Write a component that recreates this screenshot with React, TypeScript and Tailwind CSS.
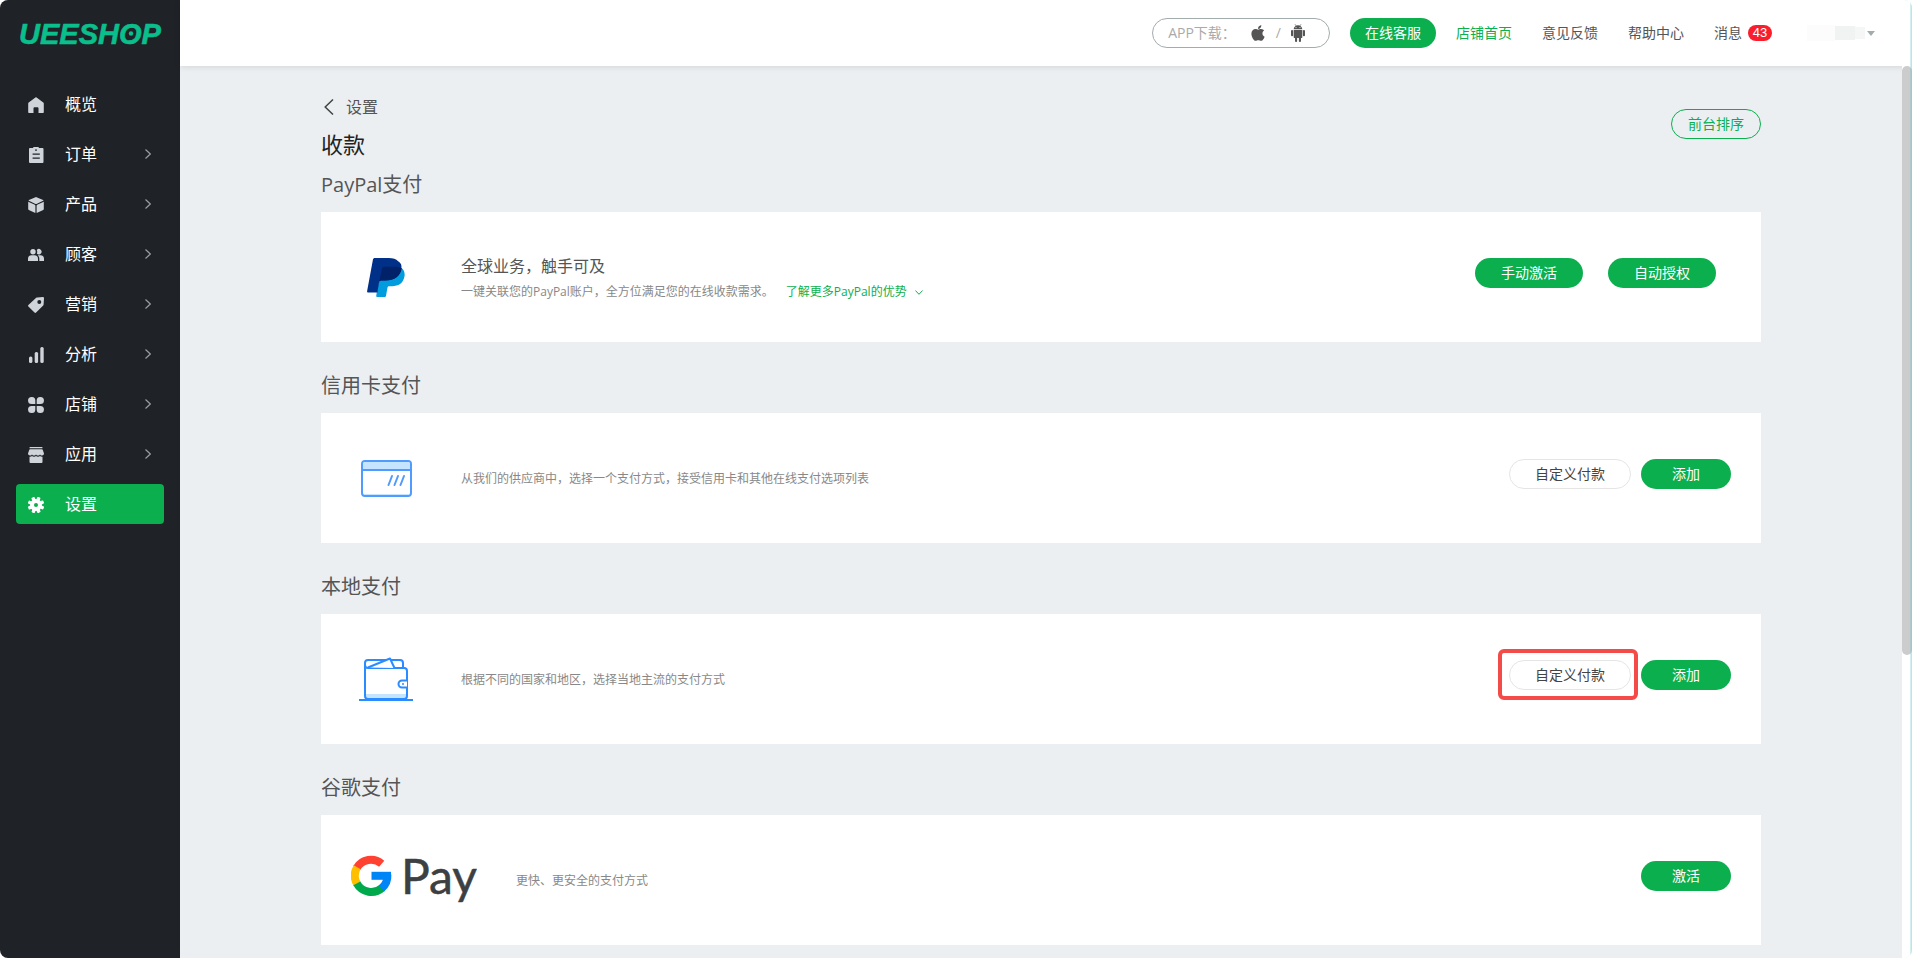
import React, { useState } from "react";
import { FaApple } from "react-icons/fa";

type IconProps = { className?: string };

const HomeIcon = ({ className }: IconProps) => (
  <svg viewBox="0 0 16 16" fill="currentColor" className={className}>
    <path d="M8.6.5a1 1 0 0 0-1.2 0L.7 5.6A1.2 1.2 0 0 0 .2 6.500V15.200c0 .4.3.8.8.8h4.500v-4.800c0-.5.4-.9.9-.9h3.200c.5 0 .9.4.9.9V16H15c.5 0 .8-.4.8-.8V6.500c0-.4-.2-.7-.5-.9L8.600.5Z" />
  </svg>
);

const OrderIcon = ({ className }: IconProps) => (
  <svg viewBox="0 0 16 16" fill="currentColor" className={className}>
    <path
      fillRule="evenodd"
      d="M5.500 0h5l.5 1H14.500a1 1 0 0 1 1 1v13a1 1 0 0 1-1 1h-12.500a1 1 0 0 1-1-1V2a1 1 0 0 1 1-1H5l.5-1ZM8 2.200a.9.9 0 1 0 .01 1.800A.9.9 0 0 0 8 2.200ZM4.600 6.500v1.200h7.200V6.500H4.600Zm0 4v1.200h7.200v-1.200H4.600Z"
    />
  </svg>
);

const ProductIcon = ({ className }: IconProps) => (
  <svg viewBox="0 0 16 16" fill="currentColor" className={className}>
    <path d="M7.500.2a1.200 1.200 0 0 1 1 0l6.600 2.900c.3.1.3.5 0 .7L8.500 7a1.200 1.200 0 0 1-1 0L.9 3.800c-.3-.2-.3-.6 0-.7L7.500.2Z" />
    <path d="M.2 5.200c0-.3.300-.5.6-.3l6 2.900c.4.200.6.500.6.900v6.700c0 .400-.3.600-.6.400L.8 13.100a1.100 1.100 0 0 1-.6-1V5.200ZM15.800 5.200c0-.3-.3-.5-.6-.3l-6 2.900c-.4.200-.6.500-.6.900v6.700c0 .4.3.6.6.4l6-2.700c.4-.200.6-.600.6-1V5.200Z" />
  </svg>
);

const CustomerIcon = ({ className }: IconProps) => (
  <svg viewBox="0 0 16 16" fill="currentColor" className={className}>
    <circle cx="5" cy="4.700" r="2.700" />
    <path d="M0 14v-2.300A3.500 3.500 0 0 1 3.500 8.200h3A3.500 3.500 0 0 1 10 11.700V14H0Z" />
    <path d="M8.800 2.900a2.700 2.700 0 1 1 0 3.600 4.200 4.200 0 0 0 0-3.600ZM9.700 8.200h2.800A3.500 3.500 0 0 1 16 11.700V14h-4.700v-2.500c0-1.300-.6-2.500-1.600-3.300Z" />
  </svg>
);

const TagIcon = ({ className }: IconProps) => (
  <svg viewBox="0 0 16 16" fill="currentColor" className={className}>
    <path
      fillRule="evenodd"
      d="M9.300.4 14.800 0c.7 0 1.200.500 1.200 1.200l-.4 6.400c0 .3-.1.600-.4.800L8.100 15.600a1.200 1.200 0 0 1-1.600 0L.4 9.500a1.200 1.200 0 0 1 0-1.600L8.200.8c.3-.3.700-.4 1.100-.4Zm2 2.500a2 2 0 1 0 0 4 2 2 0 0 0 0-4Z"
    />
  </svg>
);

const ChartIcon = ({ className }: IconProps) => (
  <svg viewBox="0 0 16 16" fill="currentColor" className={className}>
    <rect x="1" y="9.500" width="3.400" height="6.500" rx="1.500" />
    <rect x="6.700" y="5" width="3.400" height="11" rx="1.500" />
    <rect x="12.300" y="0" width="3.400" height="16" rx="1.500" />
  </svg>
);

const StoreIcon = ({ className }: IconProps) => (
  <svg viewBox="0 0 16 16" fill="currentColor" className={className}>
    <path d="M3.600 0a3.600 3.600 0 0 1 3.700 3.600v3.500H3.600A3.500 3.500 0 0 1 3.600 0ZM12.400 0a3.600 3.600 0 0 0-3.700 3.600v3.500h3.700a3.500 3.500 0 0 0 0-7.100ZM3.600 16a3.600 3.600 0 0 0 3.700-3.600V8.900H3.600a3.500 3.500 0 0 0 0 7.100ZM12.400 16a3.600 3.600 0 0 1-3.700-3.600V8.900h3.700a3.500 3.500 0 0 1 0 7.100Z" />
  </svg>
);

const AppIcon = ({ className }: IconProps) => (
  <svg viewBox="0 0 16 16" fill="currentColor" className={className}>
    <rect x="1.500" y="0" width="13" height="1.300" rx=".4" />
    <path d="M2 2.300h12c.4 0 .7.200.8.600L16 6.500c0 1.200-1 2-2 2s-2-.6-2-1.300c0 .7-1 1.300-2 1.300s-2-.6-2-1.300c0 .7-1 1.300-2 1.300s-2-.6-2-1.300c0 .7-1 1.300-2 1.300S0 7.700 0 6.500l1.200-3.600c.1-.4.4-.6.8-.6Z" />
    <path d="M1.500 9.700c1 .1 1.900-.1 2.500-.7 1 .9 3 .9 4 0 1 .9 3 .9 4 0 .6.600 1.500.8 2.500.7V15a1 1 0 0 1-1 1h-11a1 1 0 0 1-1-1V9.700Z" />
  </svg>
);

const GearIcon = ({ className }: IconProps) => (
  <svg viewBox="0 0 16 16" className={className}>
    <g fill="currentColor">
      <circle cx="8" cy="8" r="6" />
      {[0, 45, 90, 135].map((angle) => (
        <rect key={angle} x="6.300" y="-.3" width="3.400" height="16.600" rx="1" transform={`rotate(${angle + 22} 8 8)`} />
      ))}
    </g>
    <circle cx="8" cy="8" r="2" fill="#0caf4e" />
  </svg>
);

const AndroidIcon = ({ className }: IconProps) => (
  <svg viewBox="0 0 14 18" fill="currentColor" className={className}>
    <path d="M4 .2 5 1.900M10 .2 9 1.900" stroke="currentColor" strokeWidth=".6" />
    <path
      fillRule="evenodd"
      d="M2.700 5.300C2.700 3 4.600 1.300 7 1.300s4.300 1.700 4.300 4H2.700Zm2.300-2.200a.5.5 0 1 0 0 1 .5.500 0 0 0 0-1Zm4 0a.5.500 0 1 0 0 1 .5.500 0 0 0 0-1Z"
    />
    <path d="M2.700 5.900h8.600v7.300c0 .500-.4.900-.9.900h-6.800a.9.900 0 0 1-.9-.9V5.900Z" />
    <rect x="0" y="5.900" width="2.100" height="6.300" rx="1" />
    <rect x="11.900" y="5.900" width="2.100" height="6.300" rx="1" />
    <rect x="4" y="12" width="2.100" height="6" rx="1" />
    <rect x="7.900" y="12" width="2.100" height="6" rx="1" />
  </svg>
);

const Logo = () => (
  <svg viewBox="0 0 148 36" className="h-9 w-[148px]" role="img" aria-label="UEESHOP">
    <text
      x="0"
      y="29"
      fill="#0abf8c"
      stroke="#0abf8c"
      strokeWidth=".6"
      fontFamily="Liberation Sans, Arial, sans-serif"
      fontSize="29"
      fontWeight="700"
      fontStyle="italic"
    >
      UEESHOP
    </text>
    <circle cx="112" cy="18.500" r="2.200" fill="#0abf8c" />
  </svg>
);

const PaypalLogo = () => (
  <svg viewBox="0 0 38 39" className="h-[39px] w-[38px]">
    <path
      fill="#009cde"
      d="M34.800 10.300c2.500 2.100 3.300 5 2.600 8.500-1.400 6.600-6 9.400-12.300 9.400h-3c-.8 0-1.400.5-1.600 1.300L19 37.700c-.1.700-.7 1.300-1.500 1.300h-7.400c-.6 0-1-.5-.9-1.100l.8-4.900 3-18L34.800 10.300Z"
    />
    <path
      fill="#003087"
      d="M31.100 3.200C29.300 1.100 26 0 21.700 0H7.900C6.900 0 6.100.7 5.900 1.700L.1 33.200c-.1.700.4 1.300 1.100 1.300h9.200l1.500-9.700c.2-1.300 1.100-2.200 2.400-2.200h3.800c8.200 0 14.200-3.100 16.100-11.500.7-3.200.3-5.900-3.100-7.900Z"
    />
    <path
      fill="#012169"
      d="M15.200 9.800c.2-.7.700-1.100 1.500-1.100h11.200c2.600 0 4.900.4 6.900 1.600-1.500 8.300-7.400 12.300-16.700 12.300h-3.800c-1.300 0-2.200.9-2.400 2.200l-.8 4.600 4.100-19.600Z"
    />
  </svg>
);

const CardLogo = () => (
  <svg viewBox="0 0 51 37" className="h-[37px] w-[51px]" fill="none" stroke="#4f9bff" strokeWidth="2">
    <rect x="1" y="1" width="49" height="35" rx="3" fill="#fff" />
    <path d="M2 10V4a2 2 0 0 1 2-2h43a2 2 0 0 1 2 2v6Z" fill="#c5e4ff" stroke="none" />
    <path d="M1 10h49" />
    <path d="M3 34.500h45" stroke="#c5e4ff" strokeWidth="1" />
    <path d="m31 16-3.500 9M37 16l-3.500 9M43 16l-3.500 9" strokeLinecap="round" />
  </svg>
);

const WalletLogo = () => (
  <svg viewBox="0 0 54 44" className="h-11 w-[54px]" fill="none" stroke="#2a8cff" strokeWidth="2" strokeLinejoin="round">
    <path d="M6 37h42v2a3 3 0 0 1-3 3H9a3 3 0 0 1-3-3Z" fill="#c5e4ff" stroke="none" />
    <path d="M44 10V6a3 3 0 0 0-3-3H9a3 3 0 0 0-3 3v33a3 3 0 0 0 3 3h36a3 3 0 0 0 3-3V14a3 3 0 0 0-3-3H9a3 3 0 0 1-3-3" />
    <path d="m9 10.500 22-9L35.500 11" fill="#fff" />
    <path d="M48 23.500h-5a3.500 3.500 0 0 0 0 7h5" fill="#fff" />
    <circle cx="44" cy="27" r="1" fill="#2a8cff" stroke="none" />
    <path d="M0 43h54" />
  </svg>
);

const GooglePayLogo = () => (
  <svg viewBox="0 -9 126 70" className="h-[70px] w-[126px]" role="img" aria-label="G Pay">
    <g fill="none" strokeWidth="8">
      <path d="M30.700 9.700A16.500 16.500 0 0 0 5.700 14" stroke="#ff4131" />
      <path d="M6.200 13.200a16.500 16.500 0 0 0 .1 17" stroke="#ffbf00" />
      <path d="M5.800 29.400a16.500 16.500 0 0 0 25.500 4.300" stroke="#00a94b" />
      <path d="M30.600 34.400a16.500 16.500 0 0 0 5.800-13.600" stroke="#0085f7" />
    </g>
    <path d="M20.500 17.800H40v8H20.500Z" fill="#0085f7" />
    <text x="50" y="40" fill="#3c4043" stroke="#3c4043" strokeWidth=".5" fontFamily="Lato, sans-serif" fontSize="48">
      Pay
    </text>
  </svg>
);

const Chevron = ({ className }: IconProps) => (
  <svg viewBox="0 0 6 10" fill="none" stroke="currentColor" strokeWidth="1.200" className={className}>
    <path d="m.5.5 4.800 4.500-4.800 4.500" />
  </svg>
);

const menu = [
  { label: "概览", Icon: HomeIcon, sub: false },
  { label: "订单", Icon: OrderIcon, sub: true },
  { label: "产品", Icon: ProductIcon, sub: true },
  { label: "顾客", Icon: CustomerIcon, sub: true },
  { label: "营销", Icon: TagIcon, sub: true },
  { label: "分析", Icon: ChartIcon, sub: true },
  { label: "店铺", Icon: StoreIcon, sub: true },
  { label: "应用", Icon: AppIcon, sub: true },
  { label: "设置", Icon: GearIcon, sub: false },
];

const Sidebar = () => {
  const [active, setActive] = useState("设置");

  return (
    <aside className="flex w-[180px] shrink-0 flex-col bg-[#1f2226]">
      <a href="#home" className="flex h-[66px] items-center pl-[19px]">
        <Logo />
      </a>
      <nav className="mt-[18px] flex flex-col gap-[10px] px-4">
        {menu.map(({ label, Icon, sub }) => (
          <button
            key={label}
            type="button"
            onClick={() => setActive(label)}
            className={
              active === label
                ? "flex h-10 items-center rounded bg-[#0caf4e] pr-[13px] pl-3 text-base text-white"
                : "flex h-10 items-center rounded pr-[13px] pl-3 text-base text-white"
            }
          >
            <Icon className={active === label ? "mt-0.5 size-4 text-white" : "mt-0.5 size-4 text-[#cfd3da]"} />
            <span className="ml-[21px]">{label}</span>
            {sub && <Chevron className="ml-auto h-[10px] w-[6px] text-[#9a9c9f]" />}
          </button>
        ))}
      </nav>
    </aside>
  );
};

const Header = () => (
  <header className="relative z-10 flex h-[66px] shrink-0 items-center justify-end bg-white pr-[37px] text-sm text-[#555] shadow-[0_1px_6px_rgba(0,0,0,0.1)]">
    <div className="flex h-[30px] items-center rounded-full border border-[#a3acad] pr-6 pl-[15px] text-[#aaa]">
      <span>APP下载：</span>
      <a href="#ios" aria-label="iOS" className="ml-[14px] text-[#555]">
        <FaApple className="h-[18px] w-4" />
      </a>
      <span className="mx-[10px]">/</span>
      <a href="#android" aria-label="Android" className="text-[#555]">
        <AndroidIcon className="h-[18px] w-[14px]" />
      </a>
    </div>
    <button type="button" className="ml-5 h-[30px] rounded-full bg-[#0caf4e] px-[15px] text-white">
      在线客服
    </button>
    <nav className="ml-5 flex items-center gap-[30px]">
      <a href="#shop" className="text-[#0caf4e]">店铺首页</a>
      <a href="#feedback">意见反馈</a>
      <a href="#help">帮助中心</a>
      <a href="#messages" className="flex items-center gap-1.5">
        消息
        <span className="flex h-4 w-6 items-center justify-center rounded-full bg-[#fa1e2d] font-['Liberation_Sans'] text-[13px] text-white">
          43
        </span>
      </a>
    </nav>
    <button type="button" aria-label="账户" className="ml-[35px] flex items-center gap-0.5">
      <span className="flex items-center">
        <span className="h-4 w-7 bg-[#fcfcfc]" />
        <span className="h-[14px] w-5 bg-[#f1f3f3]" />
        <span className="h-3 w-[10px] bg-[#f5f6f6]" />
      </span>
      <svg viewBox="0 0 8 5" className="h-[5px] w-2" fill="#a3acad">
        <path d="M0 0h8L4 5Z" />
      </svg>
    </button>
  </header>
);

type PillProps = { children: React.ReactNode; outline?: boolean };

const Pill = ({ children, outline }: PillProps) => (
  <button
    type="button"
    className={
      outline
        ? "h-[30px] rounded-full border border-[#e5e5e5] bg-white px-[25px] text-sm text-[#444]"
        : "h-[30px] min-w-[90px] rounded-full bg-[#0caf4e] px-[26px] text-sm text-white"
    }
  >
    {children}
  </button>
);

type SectionProps = {
  title: string;
  logo: React.ReactNode;
  wide?: boolean;
  actions: React.ReactNode;
  children: React.ReactNode;
};

const Section = ({ title, logo, wide, actions, children }: SectionProps) => (
  <section>
    <h2 className="mb-3 text-xl leading-[30px] text-[#555]">{title}</h2>
    <div className="flex min-h-[130px] bg-white">
      <div className={wide ? "flex w-[185px] shrink-0 items-center justify-center" : "flex w-[130px] shrink-0 items-center justify-center"}>
        {logo}
      </div>
      <div className="ml-[10px] flex flex-1 flex-col justify-center text-xs text-[#888]">{children}</div>
      <div className="flex pt-[46px] pr-[30px]">{actions}</div>
    </div>
  </section>
);

const App = () => {
  return (
    <div className="relative flex h-screen overflow-hidden rounded-lg bg-[#ebeff2] font-['Open_Sans','Noto_Sans_CJK_SC',sans-serif]">
      <Sidebar />
      <div className="flex min-w-0 flex-1 flex-col">
        <Header />
        <div className="flex min-h-0 flex-1">
          <main className="min-w-0 flex-1 overflow-hidden px-6 pt-[29px]">
            <div className="mx-auto max-w-[1440px]">
              <div className="flex items-start justify-between">
                <div>
                  <a href="#settings" className="flex h-6 items-center gap-3 pl-[3px] text-base text-[#555]">
                    <svg viewBox="0 0 10 16" className="h-4 w-[10px]" fill="none" stroke="#444" strokeWidth="1.500">
                      <path d="M9 .5 1.200 8 9 15.500" />
                    </svg>
                    设置
                  </a>
                  <h1 className="mt-[10px] text-[22px] leading-[30px] text-[#222]">收款</h1>
                </div>
                <button type="button" className="mt-[14px] h-[30px] rounded-full border border-[#0caf4e] px-4 text-sm text-[#0caf4e]">
                  前台排序
                </button>
              </div>

              <div className="mt-[11px] flex flex-col gap-[29px] pb-[13px]">
                <Section
                  title="PayPal支付"
                  logo={<PaypalLogo />}
                  actions={
                    <div className="mr-[15px] flex gap-[25px]">
                      <Pill>手动激活</Pill>
                      <Pill>自动授权</Pill>
                    </div>
                  }
                >
                  <h3 className="text-base text-[#555]">全球业务，触手可及</h3>
                  <p className="mt-1.5 flex items-center">
                    一键关联您的PayPal账户，全方位满足您的在线收款需求。
                    <a href="#paypal" className="ml-3 flex items-center gap-2 text-[#0caf4e]">
                      了解更多PayPal的优势
                      <svg viewBox="0 0 8 5" className="h-[5px] w-2" fill="none" stroke="currentColor">
                        <path d="m.4.500 3.600 3.800L7.600.5" />
                      </svg>
                    </a>
                  </p>
                </Section>

                <Section
                  title="信用卡支付"
                  logo={<CardLogo />}
                  actions={
                    <div className="flex gap-[10px]">
                      <Pill outline>自定义付款</Pill>
                      <Pill>添加</Pill>
                    </div>
                  }
                >
                  <p className="pt-0.5">从我们的供应商中，选择一个支付方式，接受信用卡和其他在线支付选项列表</p>
                </Section>

                <Section
                  title="本地支付"
                  logo={<WalletLogo />}
                  actions={
                    <div className="flex gap-[10px]">
                      <div className="relative">
                        <Pill outline>自定义付款</Pill>
                        {/* highlight frame */}
                        <span className="pointer-events-none absolute -top-[11px] -right-[7px] -left-[11px] h-[51px] rounded-md border-4 border-[#f54b48]" />
                      </div>
                      <Pill>添加</Pill>
                    </div>
                  }
                >
                  <p className="pt-0.5">根据不同的国家和地区，选择当地主流的支付方式</p>
                </Section>

                <Section title="谷歌支付" logo={<GooglePayLogo />} wide actions={<Pill>激活</Pill>}>
                  <p className="pt-0.5">更快、更安全的支付方式</p>
                </Section>
              </div>
            </div>
          </main>
          {/* scroll rail */}
          <div className="z-20 w-[10px] shrink-0 bg-white">
            <div className="h-[66%] rounded-full bg-[#ccc]" />
          </div>
        </div>
      </div>
      <div className="pointer-events-none absolute inset-y-0 right-0 z-30 w-0.5 bg-linear-to-r from-[#5fc4c4]/20 to-[#5fc4c4]/50" />
    </div>
  );
};

export default App;
